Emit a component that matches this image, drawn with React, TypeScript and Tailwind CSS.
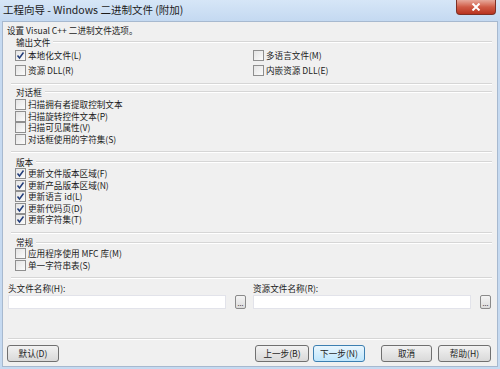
import React from "react";

const font = "font-['Microsoft_YaHei','Noto_Sans_CJK_SC',sans-serif]";

const Check = () => (
    <svg width="9" height="9" viewBox="0 0 9 9">
        <path d="M1.5 4.5 L3.5 7 L7.5 1.5" fill="none" stroke="#213c79" strokeWidth="1.5"/>
    </svg>
);

const Box = ({checked}: { checked?: boolean }) => (
    <div
        className="w-[11px] h-[11px] shrink-0 border border-[#8f8f8f] bg-gradient-to-br from-[#e4e4e4] to-[#fbfbfb] flex items-center justify-center">
        {checked && <Check/>}
    </div>
);

const Item = ({label, checked, h}: { label: string; checked?: boolean; h: string }) => (
    <div className={`flex items-center ${h}`}>
        <Box checked={checked}/>
        <span className="ml-[2px] whitespace-nowrap">{label}</span>
    </div>
);

const Header = ({title}: { title: string }) => (
    <div className="flex items-center h-[12px] pl-[9px]">
        <span className="whitespace-nowrap">{title}</span>
        <div className="flex-1 ml-[3px] h-[2px] border-t border-[#d6d6d6] border-b border-b-white"/>
    </div>
);

const Etched = ({className}: { className?: string }) => (
    <div className={`h-[2px] border-t border-[#d6d6d6] border-b border-b-white ${className ?? ""}`}/>
);

const Btn = ({label, w, focus}: { label: string; w: string; focus?: boolean }) => (
    <div
        className={`${w} h-[17px] rounded-[3px] border flex items-center justify-center ${focus ? "border-[#3c7fb1] bg-gradient-to-b from-[#eaf6fd] to-[#bee6fd]" : "border-[#707070] bg-gradient-to-b from-[#f2f2f2] to-[#d9d9d9]"}`}>
        {label}
    </div>
);

const FileField = () => (
    <div className="flex items-center h-[14px]">
        <div className="w-[218px] h-[14px] bg-white border border-[#e2e3ea]"/>
        <div
            className="ml-[9px] w-[11px] h-[14px] rounded-[2px] border border-[#8a8a8a] bg-gradient-to-b from-[#f4f4f4] to-[#dcdcdc] flex items-end justify-center text-[7px] leading-[9px]">
            ...
        </div>
    </div>
);

export default function App() {
    return (
        <div className={`w-[500px] h-[369px] bg-[#c6daf1] flex flex-col text-[#1b1b1b] ${font}`}>
            <div className="h-[21px] flex items-start bg-gradient-to-b from-[#d6e6f7] to-[#c4d9f1]">
                <span className="pl-[3px] pt-[3px] text-[10.5px] leading-[14px] whitespace-nowrap">工程向导 - Windows 二进制文件 (附加)</span>
                <div
                    className="ml-auto mr-[4px] w-[40px] h-[15px] rounded-b-[4px] border border-t-0 border-[#7d3025] bg-gradient-to-b from-[#e6a89b] via-[#cf5a45] to-[#b8321f] flex items-center justify-center">
                    <svg width="10" height="8" viewBox="0 0 10 8">
                        <path d="M1.5 0.5 L8.5 7.5 M8.5 0.5 L1.5 7.5" stroke="white" strokeWidth="2"/>
                    </svg>
                </div>
            </div>

            <div
                className="ml-[2px] w-[496px] h-[346px] border border-[#a7b9cf] bg-[#f0f0f0] pl-[4px] pr-[5px] text-[8.6px] leading-none flex flex-col">
                <div className="mt-[3px] h-[11px] flex items-center whitespace-nowrap">设置 Visual C++ 二进制文件选项。</div>

                <Header title="输出文件"/>
                <div className="pl-[8px]">
                    <div className="flex">
                        <div className="w-[238px]"><Item label="本地化文件(L)" checked h="h-[15px]"/></div>
                        <Item label="多语言文件(M)" h="h-[15px]"/>
                    </div>
                    <div className="flex">
                        <div className="w-[238px]"><Item label="资源 DLL(R)" h="h-[15px]"/></div>
                        <Item label="内嵌资源 DLL(E)" h="h-[15px]"/>
                    </div>
                </div>
                <Etched className="mt-[5px] ml-[4px]"/>

                <div className="mt-[1px]"><Header title="对话框"/></div>
                <div className="pl-[8px] mt-[1px]">
                    <Item label="扫描拥有者提取控制文本" h="h-[11.5px]"/>
                    <Item label="扫描旋转控件文本(P)" h="h-[11.5px]"/>
                    <Item label="扫描可见属性(V)" h="h-[11.5px]"/>
                    <Item label="对话框使用的字符集(S)" h="h-[11.5px]"/>
                </div>
                <Etched className="mt-[6px] ml-[4px]"/>

                <div className="mt-[3px]"><Header title="版本"/></div>
                <div className="pl-[8px]">
                    <Item label="更新文件版本区域(F)" checked h="h-[11.5px]"/>
                    <Item label="更新产品版本区域(N)" checked h="h-[11.5px]"/>
                    <Item label="更新语言 id(L)" checked h="h-[11.5px]"/>
                    <Item label="更新代码页(D)" checked h="h-[11.5px]"/>
                    <Item label="更新字符集(T)" checked h="h-[11.5px]"/>
                </div>
                <Etched className="mt-[6px] ml-[4px]"/>

                <div className="mt-[3px]"><Header title="常规"/></div>
                <div className="pl-[8px] -mt-[1px]">
                    <Item label="应用程序使用 MFC 库(M)" h="h-[12px]"/>
                    <Item label="单一字符串表(S)" h="h-[12px]"/>
                </div>
                <Etched className="mt-[5px] ml-[4px]"/>

                <div className="mt-[4px] flex pl-[1px]">
                    <div className="w-[245px]">
                        <div className="h-[12px] flex items-center">头文件名称(H):</div>
                        <FileField/>
                    </div>
                    <div>
                        <div className="h-[12px] flex items-center">资源文件名称(R):</div>
                        <FileField/>
                    </div>
                </div>

                <Etched className="mt-[29px] ml-[1px] mr-[1px]"/>

                <div className="mt-[5px] flex">
                    <Btn label="默认(D)" w="w-[52px]"/>
                    <div className="ml-auto mr-[1px] flex">
                        <Btn label="上一步(B)" w="w-[54px]"/>
                        <div className="ml-[4px]"><Btn label="下一步(N)" w="w-[52px]" focus/></div>
                        <div className="ml-[16px]"><Btn label="取消" w="w-[51px]"/></div>
                        <div className="ml-[6px]"><Btn label="帮助(H)" w="w-[53px]"/></div>
                    </div>
                </div>
            </div>
        </div>
    );
}
